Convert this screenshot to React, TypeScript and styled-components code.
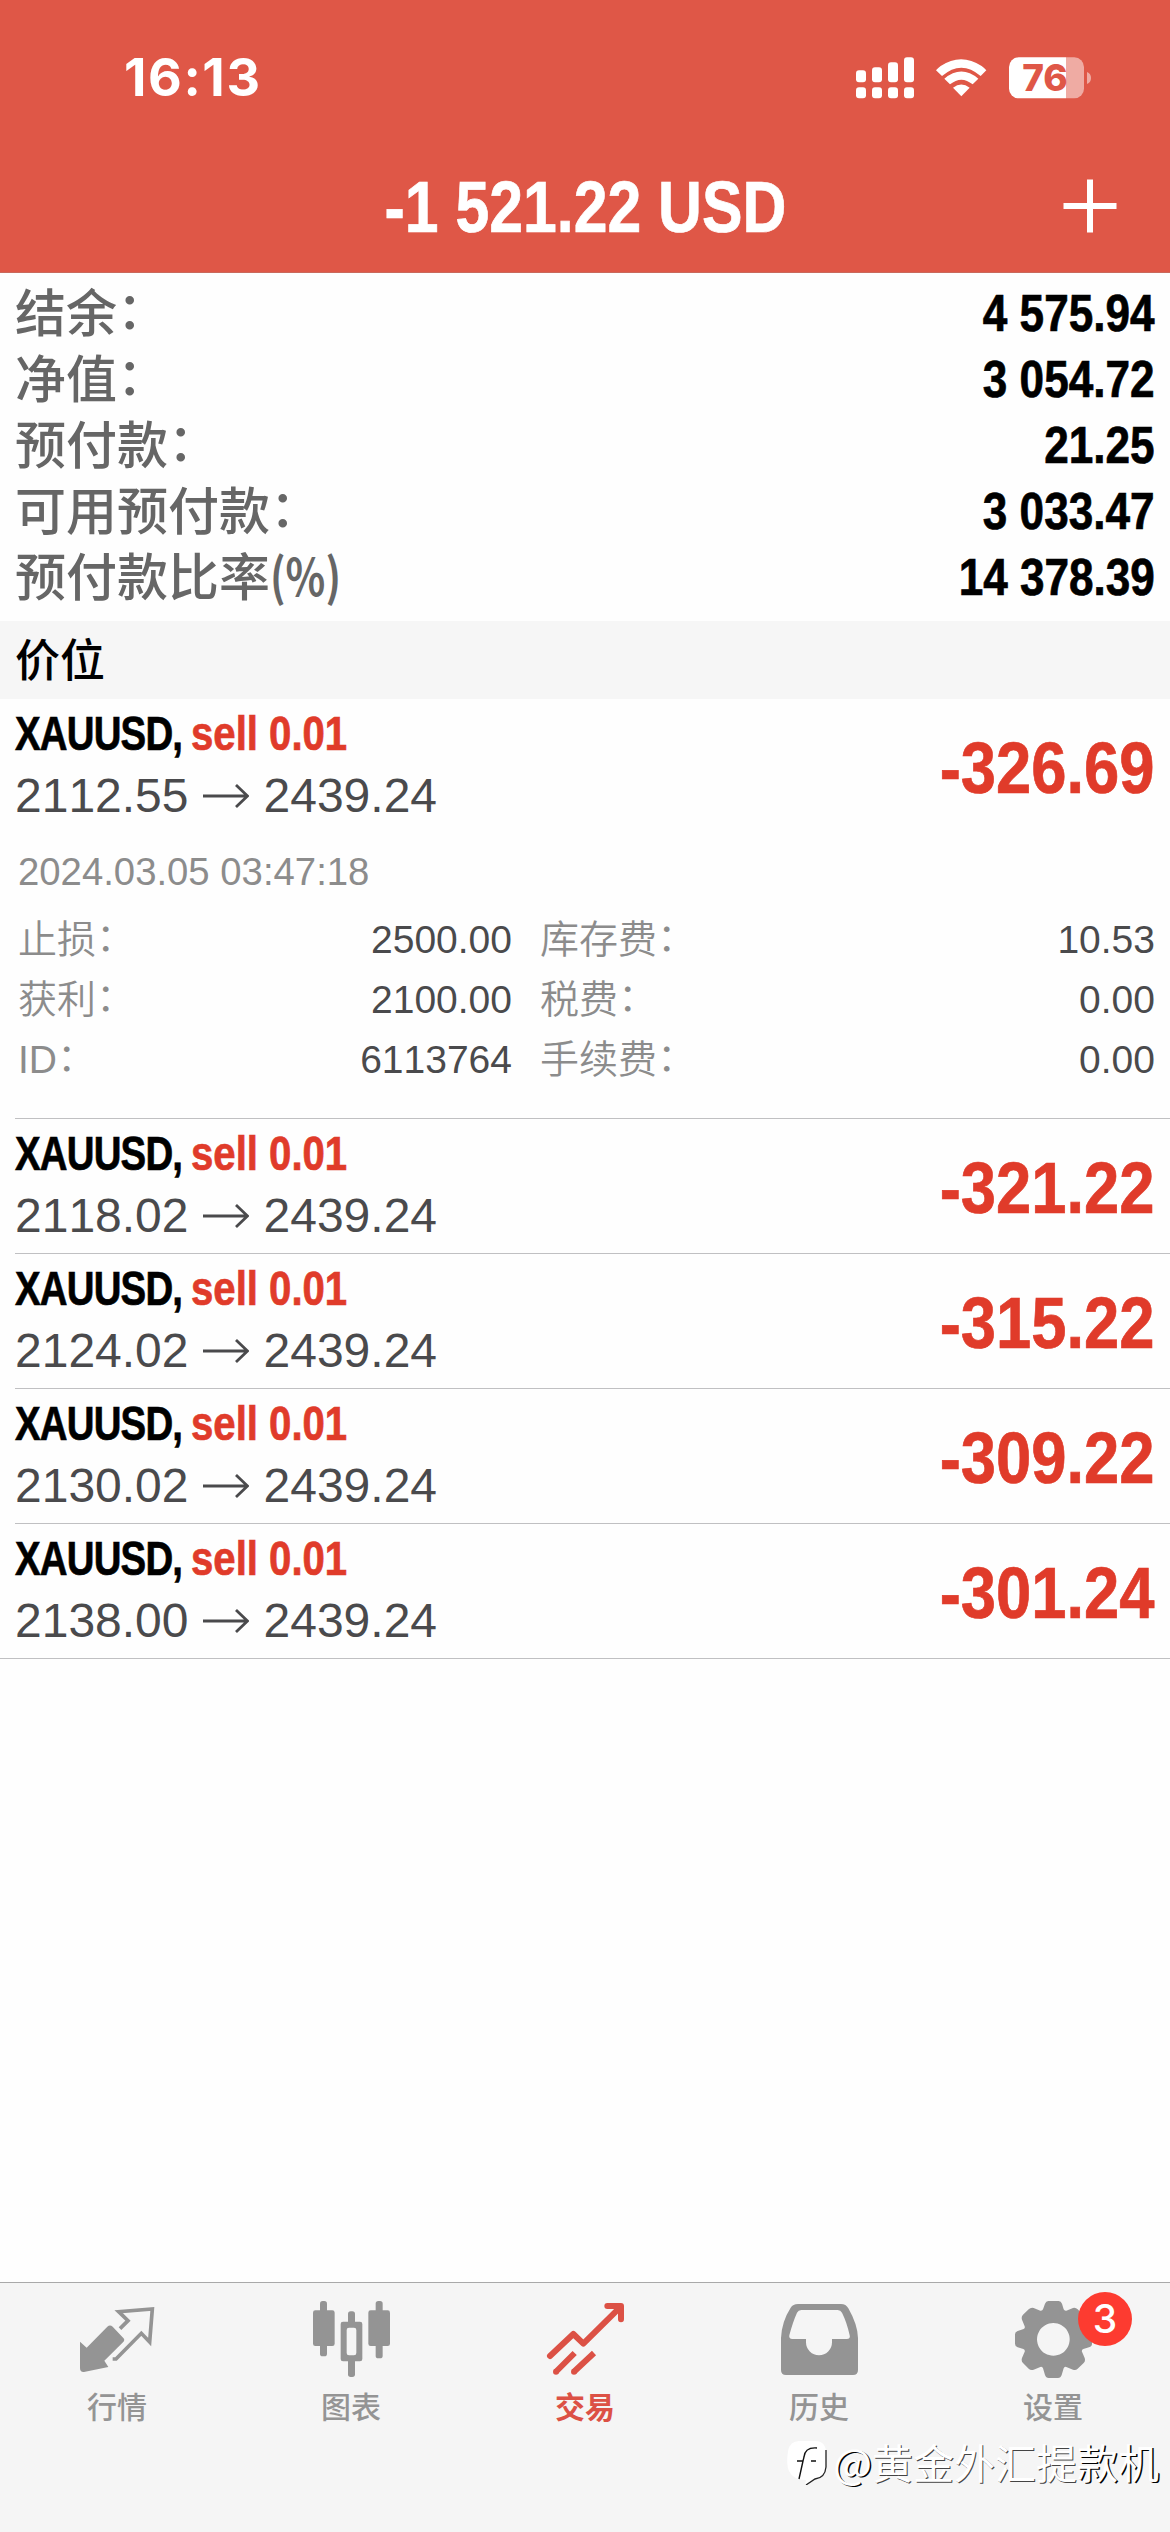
import React from "react";
import styled, { createGlobalStyle } from "styled-components";

const REGULAR = '"Liberation Sans", "Noto Sans CJK SC", sans-serif';
const CHINESE = '"Noto Sans CJK SC", sans-serif';
const SYSTEM = 'Inter, "Noto Sans CJK SC", sans-serif';
const RED = "#e03b2a";
const LINE = "#c0c0c2";

const Global = createGlobalStyle`
  * { box-sizing: border-box; }
  body { margin: 0; background: #fefefe; font-family: ${REGULAR}; }
`;

const Screen = styled.div`
  width: 1170px;
  height: 2532px;
  display: flex;
  flex-direction: column;
  background: #fefefe;
  overflow: hidden;
`;

/* Bold grotesque narrowed horizontally to get a condensed cut. */
const Condensed = styled.span<{ $scale: number; $origin?: string }>`
  display: inline-block;
  white-space: nowrap;
  transform: scaleX(${(p) => p.$scale});
  transform-origin: ${(p) => p.$origin ?? "left"} center;
  font-family: ${REGULAR};
  font-weight: 700;
  font-kerning: none;
  -webkit-text-stroke: 0.7px currentColor;
`;

const Header = styled.header`
  height: 273px;
  flex: none;
  background: #df5747;
  border-bottom: 1px solid #c9695c;
  color: #fff;
  display: flex;
  flex-direction: column;
`;

const StatusBar = styled.div`
  height: 142px;
  padding: 14px 78px 0 124px;
  display: flex;
  align-items: center;
  justify-content: space-between;
`;

const Clock = styled.span`
  font: 700 52px/60px ${SYSTEM};
  letter-spacing: 1.6px;
`;

const StatusIcons = styled.svg`
  width: 246px;
  height: 50px;
`;

const TitleBar = styled.div`
  flex: 1;
  display: grid;
  grid-template-columns: 120px 1fr 120px;
  align-items: center;
`;

const Title = styled.h1`
  grid-column: 2;
  margin: 0;
  text-align: center;
  font: 700 73px/84px ${REGULAR};
`;

const AddButton = styled.button`
  border: 0;
  padding: 0 0 3px;
  background: none;
  display: flex;
  justify-content: center;
  svg { width: 56px; height: 56px; margin-left: -40px; }
`;

const Summary = styled.dl`
  flex: none;
  margin: 0;
  height: 348px;
  padding: 7px 15px 0;
`;

const SummaryRow = styled.div`
  height: 66px;
  display: flex;
  justify-content: space-between;
  align-items: center;
`;

const SummaryLabel = styled.dt`
  padding-bottom: 6px;
  font: 500 51px/60px ${CHINESE};
  color: #666;
`;

const Percent = styled.span`
  display: inline-block;
  font-weight: 700;
  transform: scaleX(0.81);
  transform-origin: left center;
`;

const SummaryValue = styled.dd`
  margin: 0;
  padding-top: 1px;
  font: 700 51px/65px ${REGULAR};
  color: #000;
`;

const Colon = styled.span`
  position: relative;
  top: -0.06em;
`;

const Section = styled.h2`
  flex: none;
  margin: 0;
  height: 78px;
  padding: 0 15px;
  background: #f6f6f6;
  font: 500 45px/74px ${CHINESE};
  color: #000;
`;

const List = styled.div`
  border-bottom: 1px solid ${LINE};
`;

const Position = styled.article`
  margin-left: 15px;
  padding-right: 15px;
  border-bottom: 1px solid ${LINE};
  &:last-child { border-bottom: 0; }
`;

const PositionHead = styled.div`
  height: 134px;
  display: flex;
  justify-content: space-between;
  align-items: flex-start;
`;

const Deal = styled.div`
  padding-top: 3px;
`;

const Instrument = styled.div`
  display: flex;
  font: 700 48px/63px ${REGULAR};
`;

const Ticker = styled(Condensed)`
  width: 176px;
  letter-spacing: -1px;
  color: #000;
`;

const Side = styled(Condensed)`
  color: ${RED};
`;

const Prices = styled.div`
  display: flex;
  align-items: center;
  font: 400 48px/62px ${REGULAR};
  font-kerning: none;
  color: #4a4a4c;
  svg { width: 46px; height: 26px; margin: 0 15px 0 14px; }
`;

const Profit = styled.div`
  font: 700 73px/84px ${REGULAR};
  color: ${RED};
  padding-top: 27px;
`;

const Details = styled.div`
  height: 285px;
  padding: 17px 0 0 3px;
  color: #8c8c8c;
`;

const OpenedAt = styled.time`
  display: block;
  font: 400 38.3px/44px ${REGULAR};
`;

const DetailGrid = styled.dl`
  margin: 16px 0 0;
  display: grid;
  grid-template-columns: 494px 1fr;
  column-gap: 28px;
  grid-auto-rows: 60px;
`;

const Detail = styled.div`
  display: flex;
  justify-content: space-between;
  font: 400 39px/60px ${REGULAR};
  font-kerning: none;
  dt { font-weight: 350; }
  dd { margin: 0; color: #4a4a4c; }
`;

const Spacer = styled.div`
  flex: 1;
`;

const TabBar = styled.nav`
  position: relative;
  flex: none;
  height: 250px;
  background: #f5f5f5;
  border-top: 1px solid #a9a9a9;
  display: grid;
  grid-template-columns: repeat(5, 1fr);
  align-items: start;
  padding-top: 14px;
`;

const Tab = styled.a<{ $active?: boolean }>`
  position: relative;
  display: flex;
  flex-direction: column;
  align-items: center;
  color: ${(p) => (p.$active ? "#dc5145" : "#949494")};
  font: ${(p) => (p.$active ? 700 : 500)} 30px/44px ${CHINESE};
  svg { width: 84px; height: 84px; margin-bottom: 2px; }
`;

const Badge = styled.span`
  position: absolute;
  left: 142px;
  top: -5px;
  width: 54px;
  height: 54px;
  border-radius: 50%;
  background: #fd3b30;
  color: #fff;
  text-align: center;
  font: 500 39px/54px ${SYSTEM};
`;

const Watermark = styled.div`
  position: absolute;
  right: 11px;
  top: 148px;
  display: flex;
  align-items: center;
  font: 400 41px/60px ${CHINESE};
  color: #fff;
  text-shadow: 1px 1px 0 #444;
  svg { width: 45px; height: 48px; margin-right: 3px; }
  b { font-weight: 400; text-shadow: 1.5px 1px 0 #000; }
`;

const account = [
  { label: "结余", value: "4 575.94" },
  { label: "净值", value: "3 054.72" },
  { label: "预付款", value: "21.25" },
  { label: "可用预付款", value: "3 033.47" },
  { label: "预付款比率", value: "14 378.39", percent: true },
];

const details = [
  ["止损", "2500.00"],
  ["库存费", "10.53"],
  ["获利", "2100.00"],
  ["税费", "0.00"],
  ["ID", "6113764"],
  ["手续费", "0.00"],
];

const positions = [
  { open: "2112.55", profit: "-326.69", expanded: true },
  { open: "2118.02", profit: "-321.22" },
  { open: "2124.02", profit: "-315.22" },
  { open: "2130.02", profit: "-309.22" },
  { open: "2138.00", profit: "-301.24" },
];

const Arrow = () => (
  <svg viewBox="0 0 46 26" fill="none" stroke="currentColor" strokeWidth="2.8">
    <path d="M0 13H44M33 2L44.5 13L33 24" />
  </svg>
);

const StatusGlyphs = () => (
  <StatusIcons viewBox="0 0 738 150">
    <g fill="#fff" transform="translate(-13 -38)">
      <rect x="43" y="90" width="30" height="36" rx="9" />
      <rect x="91" y="81" width="30" height="45" rx="9" />
      <rect x="139" y="66" width="30" height="60" rx="9" />
      <rect x="187" y="51" width="30" height="75" rx="9" />
      {[43, 91, 139, 187].map((x) => (
        <rect key={x} x={x} y="141" width="30" height="33" rx="9" />
      ))}
      <path d="M283 90Q289 83 297 77Q358 36 420 77Q428 83 434 90L417 107Q359 57 301 107Z" />
      <path d="M308 115Q359 72 410 115L393 132Q359 104 325 132Z" />
      <path d="M334 142Q359 123 384 142L359 168Z" />
      <path d="M531 51h142v123h-142a29 29 0 0 1-29-29v-65a29 29 0 0 1 29-29z" />
      <path d="M673 51h25a29 29 0 0 1 29 29v65a29 29 0 0 1-29 29h-25z" opacity=".5" />
      <path d="M736 95q12 5 12 18t-12 18z" opacity=".5" />
      <text x="610" y="153" textAnchor="middle" fontFamily="Inter" fontWeight="800" fontSize="111" fill="#df5747">76</text>
    </g>
  </StatusIcons>
);

const QuotesIcon = () => (
  <svg viewBox="225 81 252 252" fill="currentColor">
    <path d="M240 215L260 233L322 170Q330 163 338 170L370 204Q376 210 369 217L313 272L325 291L252 306Q240 307 240 294Z" />
    <path d="M360 176L384 152L356 125L457 117L449 216L424 190L348 267H338" fill="none" stroke="currentColor" strokeWidth="11" />
  </svg>
);

const ChartIcon = () => (
  <svg viewBox="927 81 252 252" fill="currentColor">
    <rect x="939" y="121" width="65" height="107" rx="7" />
    <rect x="960" y="93" width="21" height="166" rx="8" />
    <rect x="1105" y="121" width="65" height="107" rx="7" />
    <rect x="1127" y="93" width="21" height="172" rx="8" />
    <rect x="1044" y="124" width="21" height="45" rx="8" />
    <rect x="1044" y="260" width="21" height="61" rx="8" />
    <path fillRule="evenodd" d="M1029 155h51q7 0 7 7v105q0 7-7 7h-51q-7 0-7-7v-105q0-7 7-7zM1047 173q-7 0-7 7v69q0 7 7 7h15q7 0 7-7v-69q0-7-7-7z" />
  </svg>
);

const TradeIcon = () => (
  <svg viewBox="429 81 252 252" fill="none" stroke="currentColor" strokeWidth="18" strokeLinejoin="round">
    <path d="M450 258L520 192L550 221L660 112" strokeLinecap="round" />
    <path d="M622 108H663V148" strokeLinecap="round" />
    <path d="M467 306L524 249M521 306L582 249" />
    <g fill="currentColor" stroke="none">
      <circle cx="468" cy="305" r="9" />
      <circle cx="522" cy="305" r="9" />
    </g>
  </svg>
);

const HistoryIcon = () => (
  <svg viewBox="81 81 252 252" fill="currentColor">
    <path fillRule="evenodd" d="M144 102H273Q288 102 295 115Q323 164 324 204V300Q324 315 309 315H108Q93 315 93 300V204Q95 155 122 113Q129 102 144 102ZM154 120Q145 120 141 128Q128 157 118 196Q116 207 127 207H168V217A39 39 0 0 0 246 217V207H290Q302 207 299 196Q291 158 276 128Q272 120 263 120Z" />
  </svg>
);

const SettingsIcon = () => (
  <svg viewBox="783 81 252 252" fill="currentColor">
    <path
      fillRule="evenodd"
      d="M895 93h31q7 0 10 8l5 17q2 5 8 4l20-8q8-2 14 4l16 16q7 7 3 15l-8 20q-2 6 4 8l19 6q9 3 9 10v28q0 8-9 11l-17 5q-6 3-4 8l8 19q3 9-3 15l-18 17q-6 6-14 3l-20-8q-6-2-8 4l-6 20q-3 9-11 9h-28q-8 0-11-9l-6-20q-2-6-8-4l-20 8q-9 3-15-3l-17-17q-6-6-3-15l8-19q2-5-4-8l-17-5q-8-3-8-11v-28q0-7 8-10l18-6q5-2 3-8l-8-20q-3-8 3-15l17-16q6-6 15-4l20 8q6 1 8-4l6-17q3-8 10-8zM910 159a49 49 0 1 0 .1 0z"
    />
  </svg>
);

const WatermarkLogo = () => (
  <svg viewBox="0 0 45 48">
    <path d="M14 4H30Q41 4 41 16V30Q41 41 30 42L20 48L21 43Q8 43 4 34Q1 28 3 14Q5 4 14 4Z" fill="#fff" />
    <path d="M41 13V30Q40 41 30 42L21 48" fill="none" stroke="#222" strokeWidth="1.3" />
    <path d="M32 11Q20 10 19 20L18 24H12M18 24L14 42M26 24H31" fill="none" stroke="#111" strokeWidth="1.4" />
  </svg>
);

const tabs = [
  { label: "行情", Icon: QuotesIcon },
  { label: "图表", Icon: ChartIcon },
  { label: "交易", Icon: TradeIcon, active: true },
  { label: "历史", Icon: HistoryIcon },
  { label: "设置", Icon: SettingsIcon, badge: "3" },
];

export default function App() {
  return (
    <Screen>
      <Global />
      <Header>
        <StatusBar>
          <Clock>16:13</Clock>
          <StatusGlyphs />
        </StatusBar>
        <TitleBar>
          <Title>
            <Condensed $scale={0.832} $origin="center">-1 521.22 USD</Condensed>
          </Title>
          <AddButton aria-label="add">
            <svg viewBox="0 0 56 56" stroke="#fff" strokeWidth="6" fill="none">
              <path d="M28 1.5V54.5M1.5 28H54.5" />
            </svg>
          </AddButton>
        </TitleBar>
      </Header>
      <Summary>
        {account.map(({ label, value, percent }) => (
          <SummaryRow key={label}>
            <SummaryLabel>
              {label}
              {percent ? <Percent>(%)</Percent> : <Colon>：</Colon>}
            </SummaryLabel>
            <SummaryValue>
              <Condensed $scale={0.865} $origin="right">{value}</Condensed>
            </SummaryValue>
          </SummaryRow>
        ))}
      </Summary>
      <Section>价位</Section>
      <List>
        {positions.map((p) => (
          <Position key={p.open}>
            <PositionHead>
              <Deal>
                <Instrument>
                  <Ticker $scale={0.8}>XAUUSD,</Ticker>
                  <Side $scale={0.836}>sell 0.01</Side>
                </Instrument>
                <Prices>
                  {p.open}
                  <Arrow />
                  2439.24
                </Prices>
              </Deal>
              <Profit>
                <Condensed $scale={0.868} $origin="right">{p.profit}</Condensed>
              </Profit>
            </PositionHead>
            {p.expanded && (
              <Details>
                <OpenedAt>2024.03.05 03:47:18</OpenedAt>
                <DetailGrid>
                  {details.map(([label, value]) => (
                    <Detail key={label}>
                      <dt>
                        {label}
                        <Colon>：</Colon>
                      </dt>
                      <dd>{value}</dd>
                    </Detail>
                  ))}
                </DetailGrid>
              </Details>
            )}
          </Position>
        ))}
      </List>
      <Spacer />
      <TabBar>
        {tabs.map(({ label, Icon, active, badge }) => (
          <Tab key={label} $active={active}>
            <Icon />
            {label}
            {badge && <Badge>{badge}</Badge>}
          </Tab>
        ))}
        <Watermark>
          <WatermarkLogo />
          <span>
            <b>@</b>黄金外汇提<b>款机</b>
          </span>
        </Watermark>
      </TabBar>
    </Screen>
  );
}
